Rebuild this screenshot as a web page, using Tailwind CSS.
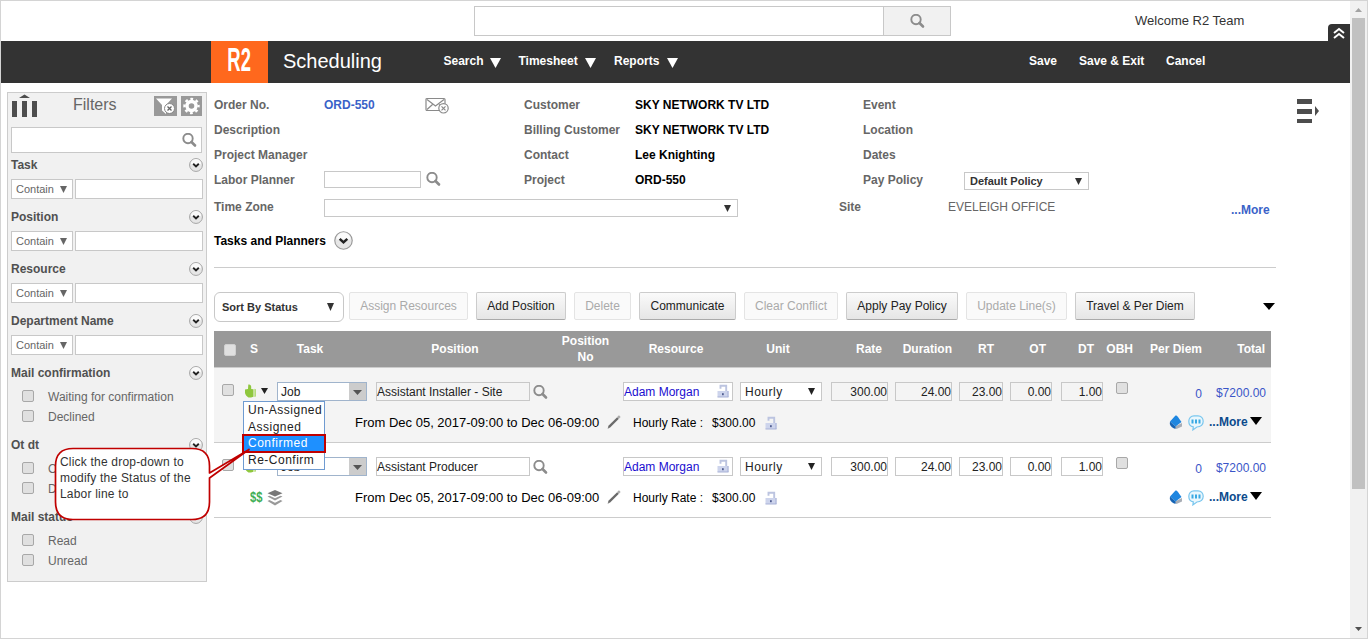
<!DOCTYPE html>
<html lang="en">
<head>
  <meta charset="UTF-8">
  <meta name="viewport" content="width=device-width, initial-scale=1.0">
  <title>R2 Scheduling</title>
  <script src="https://cdn.jsdelivr.net/npm/@tailwindcss/browser@4"></script>
  <style>
    body {
      font-family: 'Liberation Sans', Arial, sans-serif;
    }
  </style>
</head>
<body class="relative w-[1368px] h-[639px] overflow-hidden flex bg-white text-xs text-black whitespace-nowrap border-t border-l border-b border-[#d4d4d4]">

  <!-- Icons -->
  <svg class="hidden">
    <symbol id="search" viewBox="0 0 15 15">
      <circle cx="6" cy="5.500" r="4.700" fill="none" stroke="#8c8c8c" stroke-width="1.900"/>
      <path d="M9.500 9l3.500 3.500" stroke="#8c8c8c" stroke-width="2.600" stroke-linecap="round"/>
    </symbol>
    <symbol id="chevron" viewBox="0 0 20 20">
      <circle cx="10" cy="10" r="9.200" fill="#e6e6e6" stroke="#999" stroke-width="1.200"/>
      <path d="M2.500 9a7.500 7.500 0 0 1 15 0z" fill="#fafafa"/>
      <path d="M6 8.200l4 3.800 4-3.800" fill="none" stroke="#222" stroke-width="2.600"/>
    </symbol>
    <symbol id="lock" viewBox="0 0 12 14">
      <path d="M3.500 4.800V1.700h5.700V8" fill="none" stroke="#bcc4e0" stroke-width="1.900"/>
      <rect x="0.500" y="7" width="11" height="6" fill="#cdd4ec"/>
      <path d="M0.500 13h11M11 7v6" stroke="#a7b1d6" stroke-width="1"/>
      <rect x="5.200" y="9.200" width="1.400" height="2" fill="#33407a"/>
    </symbol>
    <symbol id="thumb" viewBox="0 0 12 14">
      <path d="M0 5.500L3 5 3.300.6C4.800 0 6.200 1 6.200 2.800V5l2.300.3v7.500L6 13.500H3.500C1.500 12.500.4 10.500 0 9z" fill="#8fc73e"/>
      <path d="M9.300 4.800l1.700.4v7.300l-1.700.5z" fill="#b5dc7c"/>
    </symbol>
    <symbol id="pencil" viewBox="0 0 14 14">
      <path d="M1.800 12.200L11 3" stroke="#6a6a6a" stroke-width="2.400"/>
      <path d="M10.800 3.200l2-2" stroke="#aaa" stroke-width="2.400"/>
      <path d="M.6 13.400l1.700-.5-1-1z" fill="#444"/>
    </symbol>
    <symbol id="book" viewBox="0 0 14 14">
      <path d="M5 12l8-4v3.500L7.500 14z" fill="#a9aeb6"/>
      <path d="M6.500.5c2 0 2.500 1.500 6 6.500L6.500 11.500 1 6.500z" fill="#1e86e0"/>
      <path d="M1 6.500l5.500 5V14C4 13.500 1.500 11.500.8 9z" fill="#1563b4"/>
    </symbol>
    <symbol id="chat" viewBox="0 0 16 16">
      <path d="M8 .8H6C3 .8.800 3 .8 6.300c0 3 1.800 5.200 4.500 5.600l-.4 3 4-2.900C13 12 15.200 9.500 15.200 6.300 15.200 3 13 .8 10 .8z" fill="#eaf7fd" stroke="#79c6ee" stroke-width="1.200"/>
      <path d="M4.500 4.500v4M8 4.500v4M11.500 4.500v4" stroke="#39a9e3" stroke-width="2"/>
    </symbol>
    <symbol id="caret" viewBox="0 0 12 8" preserveAspectRatio="none">
      <path d="M0 0h12L6 8z" fill="currentColor"/>
    </symbol>
  </svg>

  <div class="w-[1349px] shrink-0">

    <!-- Top bar -->
    <div class="flex h-10 pl-[473px]">
      <div class="mt-[5px] w-[410px] h-[30px] border border-[#c8c8c8]"></div>
      <div class="mt-[5px] w-[67px] h-[30px] border border-l-0 border-[#c8c8c8] bg-[#f1f1f1] flex items-center justify-center">
        <svg class="w-[15px] h-[15px]"><use href="#search"/></svg>
      </div>
      <span class="ml-[184px] leading-[39px] text-[13px] text-[#333]">Welcome R2 Team</span>
      <div class="ml-auto mt-[23px] w-[22px] h-[17px] rounded-tl bg-[#333] flex items-center justify-center">
        <svg class="w-3 h-3" viewBox="0 0 12 12" fill="none" stroke="#fff" stroke-width="2"><path d="M1 6l5-4 5 4M1 11l5-4 5 4"/></svg>
      </div>
    </div>

    <!-- Navigation -->
    <div class="flex h-[42px] pl-[210px] bg-[#333] text-white font-bold">
      <div class="w-[57px] bg-[#ff681d] flex justify-center">
        <span class="leading-[38px] text-[33px] scale-x-[0.56]">R2</span>
      </div>
      <span class="w-[161px] pl-[15px] text-xl leading-10 font-normal">Scheduling</span>
      <span class="w-[61px] pl-[14.5px] leading-10">Search</span>
      <svg class="mt-[17px] w-[11px] h-[10px]"><use href="#caret"/></svg>
      <span class="ml-[17.5px] w-[66.5px] leading-10">Timesheet</span>
      <svg class="mt-[17px] w-[11px] h-[10px]"><use href="#caret"/></svg>
      <span class="ml-[18px] w-[53px] leading-10">Reports</span>
      <svg class="mt-[17px] w-[11px] h-[10px]"><use href="#caret"/></svg>
      <span class="ml-[351px] w-[50px] leading-10">Save</span>
      <span class="w-[87px] leading-10">Save &amp; Exit</span>
      <span class="leading-10">Cancel</span>
    </div>

    <div class="flex">

      <!-- Filters -->
      <div class="ml-[6px] mt-[9px] w-[200px] h-[490px] shrink-0 border border-[#ccc] bg-[#f1f1f1] px-[3px] text-[#666]">
        <div class="flex h-[34px]">
          <svg class="mt-[1px] w-[27px] h-[24px]" viewBox="0 0 27 24" fill="#4d4d4d"><path d="M1 7h5v16H1zM11 7h5v16h-5zM21 7h5v16h-5zM8 4l5.500-3.500L19 4z"/></svg>
          <span class="ml-[35px] w-[81px] text-base leading-[23px]">Filters</span>
          <svg class="mt-[2px] w-[23px] h-[22px]" viewBox="0 0 23 22">
            <path d="M0 1h23v20H0z" fill="#999"/>
            <path d="M2 3.500h16l-6 6.500v9l-4-3.500V10z" fill="#fff"/>
            <circle cx="15.500" cy="13.500" r="5" fill="#fff" stroke="#888"/>
            <path d="M13.500 11.500l4 4M17.500 11.500l-4 4" stroke="#666" stroke-width="1.300"/>
          </svg>
          <svg class="ml-[4px] mt-[2px] w-[21px] h-[22px]" viewBox="0 0 21 22">
            <path d="M0 1h21v20H0z" fill="#999"/>
            <circle cx="10.500" cy="11" r="4.500" fill="none" stroke="#fff" stroke-width="3.400"/>
            <circle cx="10.500" cy="11" r="7" fill="none" stroke="#fff" stroke-width="2.400" stroke-dasharray="2.750 2.750" stroke-dashoffset="1.370"/>
          </svg>
        </div>
        <div class="w-[191px] h-[26px] border border-[#c8c8c8] bg-white flex items-center justify-end pr-1">
          <svg class="w-[15px] h-[15px]"><use href="#search"/></svg>
        </div>

        <div class="flex items-center justify-between w-[192px] h-[24px] font-bold text-[#505050]"><span>Task</span><svg class="w-[14px] h-[14px]"><use href="#chevron"/></svg></div>
        <div class="flex gap-[2px] mt-[2px] mb-[6px] text-[11px]">
          <div class="w-[62px] h-5 border border-[#c8c8c8] bg-white pl-1 leading-[19px] flex gap-[6px]">Contain<svg class="mt-[6px] w-[7px] h-[7px]"><use href="#caret"/></svg></div>
          <div class="w-[128px] h-5 border border-[#c8c8c8] bg-white"></div>
        </div>

        <div class="flex items-center justify-between w-[192px] h-[24px] font-bold text-[#505050]"><span>Position</span><svg class="w-[14px] h-[14px]"><use href="#chevron"/></svg></div>
        <div class="flex gap-[2px] mt-[2px] mb-[6px] text-[11px]">
          <div class="w-[62px] h-5 border border-[#c8c8c8] bg-white pl-1 leading-[19px] flex gap-[6px]">Contain<svg class="mt-[6px] w-[7px] h-[7px]"><use href="#caret"/></svg></div>
          <div class="w-[128px] h-5 border border-[#c8c8c8] bg-white"></div>
        </div>

        <div class="flex items-center justify-between w-[192px] h-[24px] font-bold text-[#505050]"><span>Resource</span><svg class="w-[14px] h-[14px]"><use href="#chevron"/></svg></div>
        <div class="flex gap-[2px] mt-[2px] mb-[6px] text-[11px]">
          <div class="w-[62px] h-5 border border-[#c8c8c8] bg-white pl-1 leading-[19px] flex gap-[6px]">Contain<svg class="mt-[6px] w-[7px] h-[7px]"><use href="#caret"/></svg></div>
          <div class="w-[128px] h-5 border border-[#c8c8c8] bg-white"></div>
        </div>

        <div class="flex items-center justify-between w-[192px] h-[24px] font-bold text-[#505050]"><span>Department Name</span><svg class="w-[14px] h-[14px]"><use href="#chevron"/></svg></div>
        <div class="flex gap-[2px] mt-[2px] mb-[6px] text-[11px]">
          <div class="w-[62px] h-5 border border-[#c8c8c8] bg-white pl-1 leading-[19px] flex gap-[6px]">Contain<svg class="mt-[6px] w-[7px] h-[7px]"><use href="#caret"/></svg></div>
          <div class="w-[128px] h-5 border border-[#c8c8c8] bg-white"></div>
        </div>

        <div class="flex items-center justify-between w-[192px] h-[24px] font-bold text-[#505050]"><span>Mail confirmation</span><svg class="w-[14px] h-[14px]"><use href="#chevron"/></svg></div>
        <div class="h-12">
          <div class="flex h-5 pl-[11px] pt-[2px] gap-[14px] leading-5"><i class="mt-[3px] w-3 h-3 rounded-[2px] border border-[#a8a8a8] bg-[#e0e0e0]"></i>Waiting for confirmation</div>
          <div class="flex h-5 pl-[11px] pt-[2px] gap-[14px] leading-5"><i class="mt-[3px] w-3 h-3 rounded-[2px] border border-[#a8a8a8] bg-[#e0e0e0]"></i>Declined</div>
        </div>

        <div class="flex items-center justify-between w-[192px] h-[24px] font-bold text-[#505050]"><span>Ot dt</span><svg class="w-[14px] h-[14px]"><use href="#chevron"/></svg></div>
        <div class="h-12">
          <div class="flex h-5 pl-[11px] pt-[2px] gap-[14px] leading-5"><i class="mt-[3px] w-3 h-3 rounded-[2px] border border-[#a8a8a8] bg-[#e0e0e0]"></i>Ot</div>
          <div class="flex h-5 pl-[11px] pt-[2px] gap-[14px] leading-5"><i class="mt-[3px] w-3 h-3 rounded-[2px] border border-[#a8a8a8] bg-[#e0e0e0]"></i>Dt</div>
        </div>

        <div class="flex items-center justify-between w-[192px] h-[24px] font-bold text-[#505050]"><span>Mail status</span><svg class="w-[14px] h-[14px]"><use href="#chevron"/></svg></div>
        <div>
          <div class="flex h-5 pl-[11px] pt-[2px] gap-[14px] leading-5"><i class="mt-[3px] w-3 h-3 rounded-[2px] border border-[#a8a8a8] bg-[#e0e0e0]"></i>Read</div>
          <div class="flex h-5 pl-[11px] pt-[2px] gap-[14px] leading-5"><i class="mt-[3px] w-3 h-3 rounded-[2px] border border-[#a8a8a8] bg-[#e0e0e0]"></i>Unread</div>
        </div>
      </div>

      <!-- Main column -->
      <div class="ml-[7px] mt-[10px] w-[1120px]">

        <!-- Order details -->
        <div class="flex h-[99px] font-bold text-[#666] leading-[25px]">
          <div class="w-[110px]">
            <div>Order No.</div>
            <div>Description</div>
            <div>Project Manager</div>
            <div>Labor Planner</div>
          </div>
          <div class="w-[200px]">
            <div class="flex h-[74px] text-[#3a62c8]">ORD-550
              <svg class="ml-[50px] mt-[4px] w-6 h-[17px]" viewBox="0 0 24 17" fill="none" stroke="#8a8a8a" stroke-width="1.200">
                <rect x="1" y="1.500" width="19" height="12" rx="1"/>
                <path d="M2 2.500l8.500 6.500L19 2.500M2 12.500l5.500-5M19 12l-5-4.500"/>
                <circle cx="18.500" cy="11.300" r="4.700" fill="#fff"/>
                <path d="M16.500 9.300l4 4M20.500 9.300l-4 4"/>
              </svg>
            </div>
            <div class="flex pt-1">
              <div class="w-[97px] h-[17px] border border-[#c8c8c8]"></div>
              <svg class="ml-[5px] mt-[1px] w-[15px] h-[15px]"><use href="#search"/></svg>
            </div>
          </div>
          <div class="w-[111px]">
            <div>Customer</div>
            <div>Billing Customer</div>
            <div>Contact</div>
            <div>Project</div>
          </div>
          <div class="w-[228px] text-black">
            <div>SKY NETWORK TV LTD</div>
            <div>SKY NETWORK TV LTD</div>
            <div>Lee Knighting</div>
            <div>ORD-550</div>
          </div>
          <div class="w-[101px]">
            <div>Event</div>
            <div>Location</div>
            <div>Dates</div>
            <div>Pay Policy</div>
          </div>
          <div class="w-[125px] pt-[79px]">
            <div class="flex justify-between h-[18px] border border-[#c8c8c8] pl-[5px] pr-[6px] text-[11px] leading-[17px] text-[#333]">Default Policy<svg class="mt-[5px] w-[7px] h-[7px]"><use href="#caret"/></svg></div>
          </div>
          <svg class="ml-[208px] mt-[5px] w-[23px] h-[26px]" viewBox="0 0 23 26" fill="#4d4d4d"><path d="M0 1h15v5H0zM0 11h15v5H0zM0 21h15v4H0zM18 8l4 5-4 5z"/></svg>
        </div>
        <div class="flex h-[30px] font-bold text-[#666] leading-[30px]">
          <span class="w-[110px]">Time Zone</span>
          <div class="mt-[7px] w-[414px] h-[18px] border border-[#c8c8c8] flex justify-end pr-[6px] text-[#333]"><svg class="mt-[5px] w-[7px] h-[7px]"><use href="#caret"/></svg></div>
          <span class="ml-[101px] w-[109px]">Site</span>
          <span class="w-[283px] font-normal">EVELEIGH OFFICE</span>
          <span class="pt-[3px] text-[#3a62c8]">...More</span>
        </div>
        <div class="flex items-center h-[37px] font-bold">Tasks and Planners<svg class="ml-2 w-[19px] h-[19px]"><use href="#chevron"/></svg></div>
        <div class="mt-2 w-[1062px] h-px bg-[#ccc]"></div>

        <!-- Toolbar -->
        <div class="flex mt-6 h-[39px] leading-[26px]">
          <div class="w-[130px] h-[30px] border border-[#c8c8c8] rounded-md flex justify-between pl-[7px] pr-[9px] text-[11px] leading-[29px] font-bold text-[#333]">Sort By Status<svg class="mt-[10px] w-[7px] h-[8px]"><use href="#caret"/></svg></div>
          <div class="ml-[5px] w-[119px] h-7 text-center border border-[#e4e4e4] rounded-[2px] bg-[#fafafa] text-[#aaa]">Assign Resources</div>
          <div class="ml-2 w-[90px] h-7 text-center border border-[#ccc] border-b-[#aaa] rounded-[2px] bg-linear-to-b from-[#fafafa] to-[#e6e6e6] text-[#222]">Add Position</div>
          <div class="ml-2 w-[57px] h-7 text-center border border-[#e4e4e4] rounded-[2px] bg-[#fafafa] text-[#aaa]">Delete</div>
          <div class="ml-2 w-[97px] h-7 text-center border border-[#ccc] border-b-[#aaa] rounded-[2px] bg-linear-to-b from-[#fafafa] to-[#e6e6e6] text-[#222]">Communicate</div>
          <div class="ml-2 w-[94px] h-7 text-center border border-[#e4e4e4] rounded-[2px] bg-[#fafafa] text-[#aaa]">Clear Conflict</div>
          <div class="ml-2 w-[112px] h-7 text-center border border-[#ccc] border-b-[#aaa] rounded-[2px] bg-linear-to-b from-[#fafafa] to-[#e6e6e6] text-[#222]">Apply Pay Policy</div>
          <div class="ml-2 w-[101px] h-7 text-center border border-[#e4e4e4] rounded-[2px] bg-[#fafafa] text-[#aaa]">Update Line(s)</div>
          <div class="ml-2 w-[120px] h-7 text-center border border-[#ccc] border-b-[#aaa] rounded-[2px] bg-linear-to-b from-[#fafafa] to-[#e6e6e6] text-[#222]">Travel &amp; Per Diem</div>
          <svg class="ml-[68px] mt-[11px] w-3 h-[7px]"><use href="#caret"/></svg>
        </div>

        <!-- Labor lines -->
        <div class="w-[1057px]">
          <div class="flex items-center h-[37px] bg-[#999] border-b border-[#ccc] text-white font-bold text-center">
            <div class="w-[26px] pl-[10px]"><i class="block mt-[2px] w-3 h-3 rounded-[2px] border border-[#d0d0d0] bg-[#e0e0e0]"></i></div>
            <div class="w-[28px]">S</div>
            <div class="w-[84px]">Task</div>
            <div class="w-[206px]">Position</div>
            <div class="w-[55px] leading-4">Position<br>No</div>
            <div class="w-[126px]">Resource</div>
            <div class="w-[78px]">Unit</div>
            <div class="w-[65px] text-right">Rate</div>
            <div class="w-[70px] text-right">Duration</div>
            <div class="w-[42px] text-right">RT</div>
            <div class="w-[52px] text-right">OT</div>
            <div class="w-[48px] text-right">DT</div>
            <div class="w-[39px] text-right">OBH</div>
            <div class="w-[69px] text-right">Per Diem</div>
            <div class="w-[63px] text-right">Total</div>
          </div>

          <div class="h-[75px] pt-[14px] bg-[#f4f4f4] border-b border-[#ccc]">
            <div class="flex h-[30px] pl-2 leading-[18px] text-[#222]">
              <i class="mt-[2px] w-3 h-3 rounded-[2px] border border-[#a8a8a8] bg-[#e0e0e0]"></i>
              <svg class="ml-[11px] mt-[2px] w-3 h-[14px]"><use href="#thumb"/></svg>
              <svg class="ml-1 mt-[6px] w-[7px] h-[6px]"><use href="#caret"/></svg>
              <div class="ml-[9px] w-[90px] h-[19px] border border-[#a0b4cc] bg-white flex justify-between pl-[3px]">Job<span class="w-[17px] bg-[#ccc] pl-1 pt-[7px] text-[#555]"><svg class="w-[9px] h-[5px]"><use href="#caret"/></svg></span></div>
              <div class="ml-[9px] w-[154px] h-[19px] border border-[#c8c8c8]">Assistant Installer - Site</div>
              <svg class="ml-[3px] mt-[3px] w-[15px] h-[15px]"><use href="#search"/></svg>
              <div class="ml-[75px] w-[110px] h-[19px] border border-[#c8c8c8] bg-white text-[#1a0dd0] flex justify-between pr-[3px]">Adam Morgan<svg class="mt-[1px] w-3 h-[14px]"><use href="#lock"/></svg></div>
              <div class="ml-[7px] w-[82px] h-[19px] border border-[#c8c8c8] bg-white flex justify-between pl-1 pr-[6px] tracking-[0.5px]">Hourly<svg class="mt-[5px] w-[7px] h-[7px]"><use href="#caret"/></svg></div>
              <div class="ml-[9px] w-[57px] h-[19px] border border-[#c8c8c8] text-right">300.00</div>
              <div class="ml-[7px] w-[57px] h-[19px] border border-[#c8c8c8] text-right">24.00</div>
              <div class="ml-[7px] w-[44px] h-[19px] border border-[#c8c8c8] text-right">23.00</div>
              <div class="ml-[7px] w-[42px] h-[19px] border border-[#c8c8c8] text-right">0.00</div>
              <div class="ml-[9px] w-[42px] h-[19px] border border-[#c8c8c8] text-right">1.00</div>
              <i class="ml-[13px] w-3 h-3 rounded-[2px] border border-[#a8a8a8] bg-[#e0e0e0]"></i>
              <span class="w-[74px] pt-[3px] text-right text-[#3a55c8]">0</span>
              <span class="w-[64px] pt-[2px] text-right text-[#3a55c8]">$7200.00</span>
            </div>
            <div class="flex pl-[141px] leading-[22px]">
              <span class="w-[252px] text-[13px]">From Dec 05, 2017-09:00 to Dec 06-09:00</span>
              <svg class="mt-[3px] w-[14px] h-[14px]"><use href="#pencil"/></svg>
              <span class="ml-3 w-[79px]">Hourly Rate :</span>
              <span class="w-[53px]">$300.00</span>
              <svg class="mt-[4px] w-3 h-[14px]"><use href="#lock"/></svg>
              <svg class="ml-[392px] mt-[3px] w-[14px] h-[14px]"><use href="#book"/></svg>
              <svg class="ml-[5px] mt-[3px] w-4 h-4"><use href="#chat"/></svg>
              <span class="ml-[5px] w-[41px] leading-[21px] font-bold text-[#0c4a8c]">...More</span>
              <svg class="mt-[5px] w-3 h-2"><use href="#caret"/></svg>
            </div>
          </div>

          <div class="h-[75px] pt-[14px] border-b border-[#ccc]">
            <div class="flex h-[30px] pl-2 leading-[18px] text-[#222]">
              <i class="mt-[2px] w-3 h-3 rounded-[2px] border border-[#a8a8a8] bg-[#e0e0e0]"></i>
              <svg class="ml-[11px] mt-[2px] w-3 h-[14px]"><use href="#thumb"/></svg>
              <svg class="ml-1 mt-[6px] w-[7px] h-[6px]"><use href="#caret"/></svg>
              <div class="ml-[9px] w-[90px] h-[19px] border border-[#a0b4cc] bg-white flex justify-between pl-[3px]">Job<span class="w-[17px] bg-[#ccc] pl-1 pt-[7px] text-[#555]"><svg class="w-[9px] h-[5px]"><use href="#caret"/></svg></span></div>
              <div class="ml-[9px] w-[154px] h-[19px] border border-[#c8c8c8]">Assistant Producer</div>
              <svg class="ml-[3px] mt-[3px] w-[15px] h-[15px]"><use href="#search"/></svg>
              <div class="ml-[75px] w-[110px] h-[19px] border border-[#c8c8c8] bg-white text-[#1a0dd0] flex justify-between pr-[3px]">Adam Morgan<svg class="mt-[1px] w-3 h-[14px]"><use href="#lock"/></svg></div>
              <div class="ml-[7px] w-[82px] h-[19px] border border-[#c8c8c8] bg-white flex justify-between pl-1 pr-[6px] tracking-[0.5px]">Hourly<svg class="mt-[5px] w-[7px] h-[7px]"><use href="#caret"/></svg></div>
              <div class="ml-[9px] w-[57px] h-[19px] border border-[#c8c8c8] text-right">300.00</div>
              <div class="ml-[7px] w-[57px] h-[19px] border border-[#c8c8c8] text-right">24.00</div>
              <div class="ml-[7px] w-[44px] h-[19px] border border-[#c8c8c8] text-right">23.00</div>
              <div class="ml-[7px] w-[42px] h-[19px] border border-[#c8c8c8] text-right">0.00</div>
              <div class="ml-[9px] w-[42px] h-[19px] border border-[#c8c8c8] text-right">1.00</div>
              <i class="ml-[13px] w-3 h-3 rounded-[2px] border border-[#a8a8a8] bg-[#e0e0e0]"></i>
              <span class="w-[74px] pt-[3px] text-right text-[#3a55c8]">0</span>
              <span class="w-[64px] pt-[2px] text-right text-[#3a55c8]">$7200.00</span>
            </div>
            <div class="flex pl-9 leading-[22px]">
              <span class="w-[17px] text-sm font-bold text-[#3fae55]"><span class="inline-block scale-x-[0.8] origin-left">$$</span></span>
              <svg class="mt-[3px] w-4 h-4" viewBox="0 0 16 16"><path d="M8 0l7.500 3.200L8 6.500.5 3.200z" fill="#777"/><path d="M.5 6.500l2-.8L8 8.200l5.500-2.500 2 .8L8 10.500zM.5 11l2-1L8 12.800l5.500-2.800 2 1L8 15.500z" fill="#999"/></svg>
              <span class="ml-[72px] w-[252px] text-[13px]">From Dec 05, 2017-09:00 to Dec 06-09:00</span>
              <svg class="mt-[3px] w-[14px] h-[14px]"><use href="#pencil"/></svg>
              <span class="ml-3 w-[79px]">Hourly Rate :</span>
              <span class="w-[53px]">$300.00</span>
              <svg class="mt-[4px] w-3 h-[14px]"><use href="#lock"/></svg>
              <svg class="ml-[392px] mt-[3px] w-[14px] h-[14px]"><use href="#book"/></svg>
              <svg class="ml-[5px] mt-[3px] w-4 h-4"><use href="#chat"/></svg>
              <span class="ml-[5px] w-[41px] leading-[21px] font-bold text-[#0c4a8c]">...More</span>
              <svg class="mt-[5px] w-3 h-2"><use href="#caret"/></svg>
            </div>
          </div>
        </div>
      </div>
    </div>
  </div>

  <!-- Scrollbar -->
  <div class="w-[17px] shrink-0 h-full bg-[#f1f1f1] flex flex-col items-center">
    <svg class="mt-[7px] w-[7px] h-1 rotate-180 text-[#a3a3a3]"><use href="#caret"/></svg>
    <div class="mt-[6px] w-[13px] h-[471px] bg-[#c1c1c1]"></div>
    <svg class="mt-auto mb-[7px] w-[7px] h-1 text-[#505050]"><use href="#caret"/></svg>
  </div>
  <div class="w-px h-full bg-[#d4d4d4]"></div>

  <!-- Status menu -->
  <div class="absolute left-[242px] top-[400px] w-[82px] h-[69px] border border-[#6f9bd1] bg-white pl-1 text-xs tracking-[0.5px] leading-[16px] text-[#222]">
    <div>Un-Assigned</div>
    <div class="pt-px">Assigned</div>
    <div class="relative -left-[6px] -mt-[1px] w-[84px] h-[19px] border-2 border-[#c00000] bg-[#1e90ff] pl-1 leading-[14px] text-white">Confirmed</div>
    <div class="-mt-[1px]">Re-Confirm</div>
  </div>

  <!-- Callout -->
  <svg class="absolute left-[53px] top-[446px] w-[200px] h-[76px]" viewBox="54 447 200 76">
    <path d="M73 448.500H192Q209.500 448.500 209.500 466V473L249 449.500L209.500 478V502Q209.500 519.500 192 519.500H73Q55.500 519.500 55.500 502V466Q55.500 448.500 73 448.500Z" fill="#fff" stroke="#c00000" stroke-width="1.700" stroke-linejoin="round"/>
  </svg>
  <div class="absolute left-[59px] top-[453px] leading-4 tracking-[0.2px] text-[#333]">Click the drop-down to<br>modify the Status of the<br>Labor line to</div>
</body>
</html>
